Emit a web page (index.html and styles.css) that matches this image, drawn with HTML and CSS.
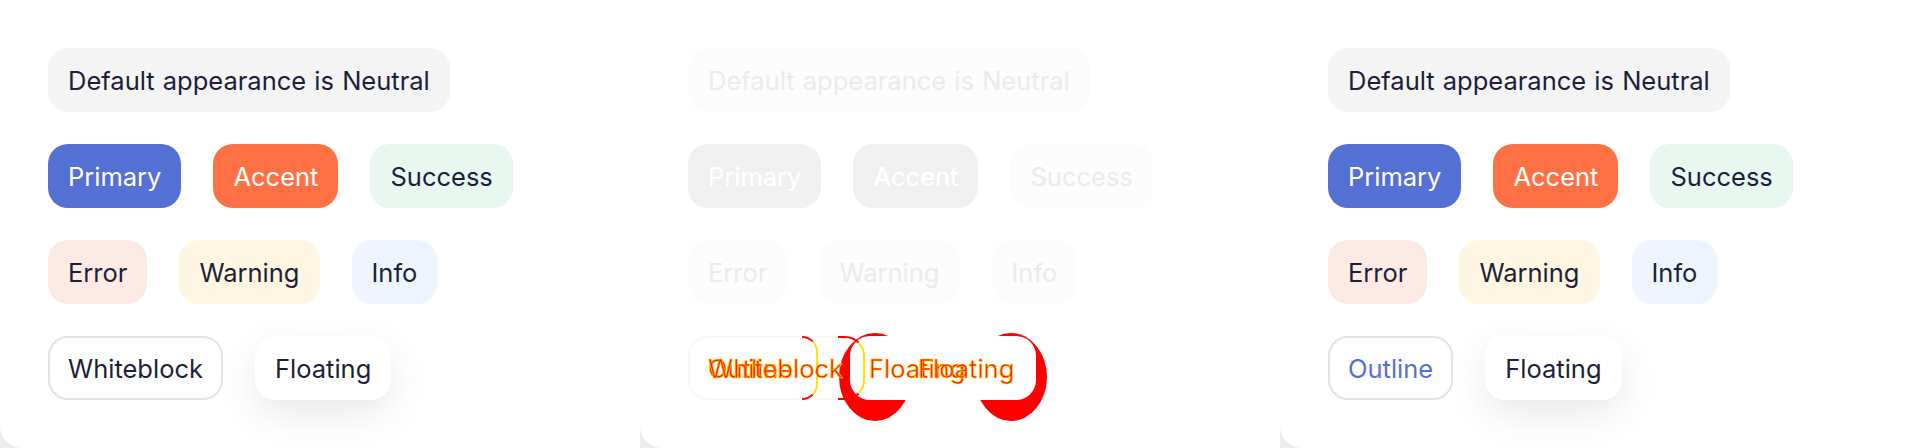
FILE: index.html
```html
<!DOCTYPE html>
<html lang="en">
<head>
<meta charset="utf-8">
<title>Chip appearances</title>
<link rel="stylesheet" href="styles.css">
</head>
<body>
<div class="panels">
  <section class="panel">
    <div class="row"><span class="chip neutral">Default appearance is Neutral</span></div>
    <div class="row">
      <span class="chip primary">Primary</span>
      <span class="chip accent">Accent</span>
      <span class="chip success">Success</span>
    </div>
    <div class="row">
      <span class="chip error">Error</span>
      <span class="chip warning">Warning</span>
      <span class="chip info">Info</span>
    </div>
    <div class="row">
      <span class="chip whiteblock">Whiteblock</span>
      <span class="chip floating">Floating</span>
    </div>
  </section>

  <section class="panel disabled">
    <div class="row"><span class="chip neutral">Default appearance is Neutral</span></div>
    <div class="row">
      <span class="chip primary">Primary</span>
      <span class="chip accent">Accent</span>
      <span class="chip success">Success</span>
    </div>
    <div class="row">
      <span class="chip error">Error</span>
      <span class="chip warning">Warning</span>
      <span class="chip info">Info</span>
    </div>
    <div class="row diff-row">
      <span class="chip whiteblock">&nbsp;</span>
      <div class="diff">
        <span class="diff-moon m-left"></span>
        <span class="diff-moon m-right"></span>
        <span class="diff-cover c-left"></span>
        <span class="diff-cover c-right"></span>
        <span class="diff-bracket b-outline"></span>
        <span class="diff-bracket b-white"></span>
        <span class="diff-text t-outline">Outline</span>
        <span class="diff-text t-white">Whiteblock</span>
        <span class="diff-text t-float1">Floating</span>
        <span class="diff-text t-float2">Floating</span>
      </div>
    </div>
  </section>

  <section class="panel">
    <div class="row"><span class="chip neutral">Default appearance is Neutral</span></div>
    <div class="row">
      <span class="chip primary">Primary</span>
      <span class="chip accent">Accent</span>
      <span class="chip success">Success</span>
    </div>
    <div class="row">
      <span class="chip error">Error</span>
      <span class="chip warning">Warning</span>
      <span class="chip info">Info</span>
    </div>
    <div class="row">
      <span class="chip outline">Outline</span>
      <span class="chip floating">Floating</span>
    </div>
  </section>
</div>
</body>
</html>
```

FILE: styles.css
```css
* { box-sizing: border-box; }

html, body {
  margin: 0;
  padding: 0;
}

body {
  background: #ededed;
  font-family: Inter, "Noto Sans", "Liberation Sans", sans-serif;
  color: #1c1f3a;
  overflow: hidden;
}

.panels {
  display: grid;
  grid-template-columns: repeat(3, 640px);
  height: 448px;
}

.panel {
  background: #ffffff;
  border-bottom-left-radius: 22px;
  padding: 48px 0 0 48px;
  display: flex;
  flex-direction: column;
  gap: 32px;
  position: relative;
}

.row {
  display: flex;
  gap: 32px;
  align-items: center;
}

.chip {
  display: inline-flex;
  align-items: center;
  height: 64px;
  padding: 0 20px;
  border-radius: 20px;
  font-size: 25.5px;
  word-spacing: 1px;
  white-space: nowrap;
  color: #1c1f3a;
}

.neutral { background: #f4f4f5; }
.primary { background: #5470d4; color: #ffffff; }
.accent { background: #ff7145; color: #ffffff; }
.success { background: #e8f8f1; }
.error { background: #fdeae5; }
.warning { background: #fef6e0; }
.info { background: #eef5fe; }

.whiteblock, .outline {
  background: #ffffff;
  border: 2px solid #e4e4e4;
  padding: 0 18px;
}
.outline { color: #5470d4; }

.floating {
  background: #ffffff;
  box-shadow: 0 14px 40px rgba(0, 0, 0, 0.09);
}

/* disabled panel */
.disabled .chip { color: #ebebeb; }
.disabled .neutral { background: #fcfcfc; }
.disabled .primary,
.disabled .accent { background: #f1f1f1; color: #ffffff; }
.disabled .success,
.disabled .error,
.disabled .warning,
.disabled .info { background: #fcfcfc; }
.disabled .whiteblock { border-color: #f7f7f7; width: 177px; }

/* diff overlay */
.diff-row { position: relative; }

.diff {
  position: absolute;
  left: 0;
  top: 0;
  width: 420px;
  height: 100px;
  pointer-events: none;
}

.diff-moon {
  position: absolute;
  top: -3px;
  width: 72px;
  height: 88px;
  border-radius: 50%;
  background: #ff0000;
}
.m-left { left: 151px; }
.m-right { left: 287px; }

.diff-cover {
  position: absolute;
  top: 0;
  width: 112px;
  height: 64px;
  border-radius: 20px;
  background: #ffffff;
}
.c-left { left: 162px; }
.c-right { left: 236px; }

.diff-bracket {
  position: absolute;
  top: 0;
  height: 64px;
  border: 2px solid #ff0000;
  border-left: none;
  border-radius: 0 20px 20px 0;
}
.b-outline { left: 114px; width: 16px; border-color: #ff0000 #ffe600 #ff0000 transparent; }
.b-white { left: 150px; width: 27px; border-color: #ff0000 #ffe600 #ff0000 transparent; }

.diff-text {
  position: absolute;
  top: 0;
  height: 64px;
  display: flex;
  align-items: center;
  font-size: 25.5px;
  color: #ff1a00;
  -webkit-text-stroke: 0.5px #ffe600;
  white-space: nowrap;
}
.t-outline, .t-white { left: 20px; }
.t-float1 { left: 181px; }
.t-float2 { left: 230px; }
```
